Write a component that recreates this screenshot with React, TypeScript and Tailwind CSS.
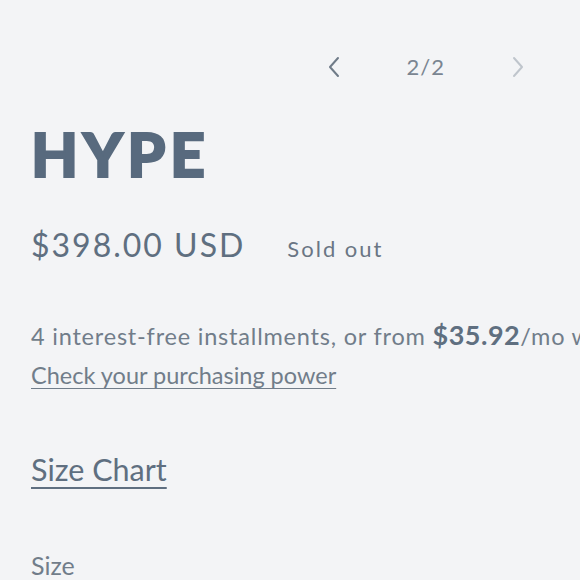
import React from "react";

function Chevron({ dir, className }: { dir: "left" | "right"; className?: string }) {
  return (
    <svg width="14" height="22" viewBox="0 0 14 22" fill="none" className={className}>
      <path
        d={dir === "left" ? "M11 2 L3 11 L11 20" : "M3 2 L11 11 L3 20"}
        stroke="currentColor"
        strokeWidth="2"
        strokeLinecap="round"
        strokeLinejoin="round"
      />
    </svg>
  );
}

export default function App() {
  return (
    <div className="h-[580px] w-[580px] overflow-hidden bg-[#f3f4f6]" style={{ fontFamily: "Lato, 'Noto Sans', sans-serif" }}>
      <div className="w-[900px] pl-[31px]">
        <div className="flex h-[67px] w-[494px] items-end justify-end">
          <div className="flex translate-y-[16px] items-center">
            <Chevron dir="left" className="text-[#6f7b88]" />
            <span className="mx-[66px] text-[22px] tracking-[1px] text-[#7a8591]">2/2</span>
            <Chevron dir="right" className="text-[#bfc5cc]" />
          </div>
        </div>

        <h1 className="mt-[56px] text-[61px] font-black leading-none tracking-[4.5px] text-[#586a7e] [-webkit-text-stroke:2px_#586a7e]">
          HYPE
        </h1>

        <div className="mt-[37px] flex items-baseline">
          <span className="text-[32px] tracking-[2px] text-[#5f6f80]">$398.00 USD</span>
          <span className="ml-[42px] text-[22px] tracking-[2px] text-[#6a7684]">Sold out</span>
        </div>

        <p className="mt-[46px] whitespace-nowrap text-[23.5px] leading-[39px] tracking-[0.8px] text-[#717d8a]">
          4 interest-free installments, or from{" "}
          <span className="text-[27px] font-bold tracking-[0.5px] text-[#5f6f80]">$35.92</span>/mo with
        </p>
        <a href="#" className="block text-[23.5px] leading-[39px] text-[#717d8a] underline decoration-1 underline-offset-[4px]">
          Check your purchasing power
        </a>

        <a href="#" className="mt-[52px] block text-[30.5px] text-[#5f6f80] underline decoration-2 underline-offset-[6px]">
          Size Chart
        </a>

        <div className="mt-[54px] text-[25px] text-[#717d8a]">Size</div>
      </div>
    </div>
  );
}
